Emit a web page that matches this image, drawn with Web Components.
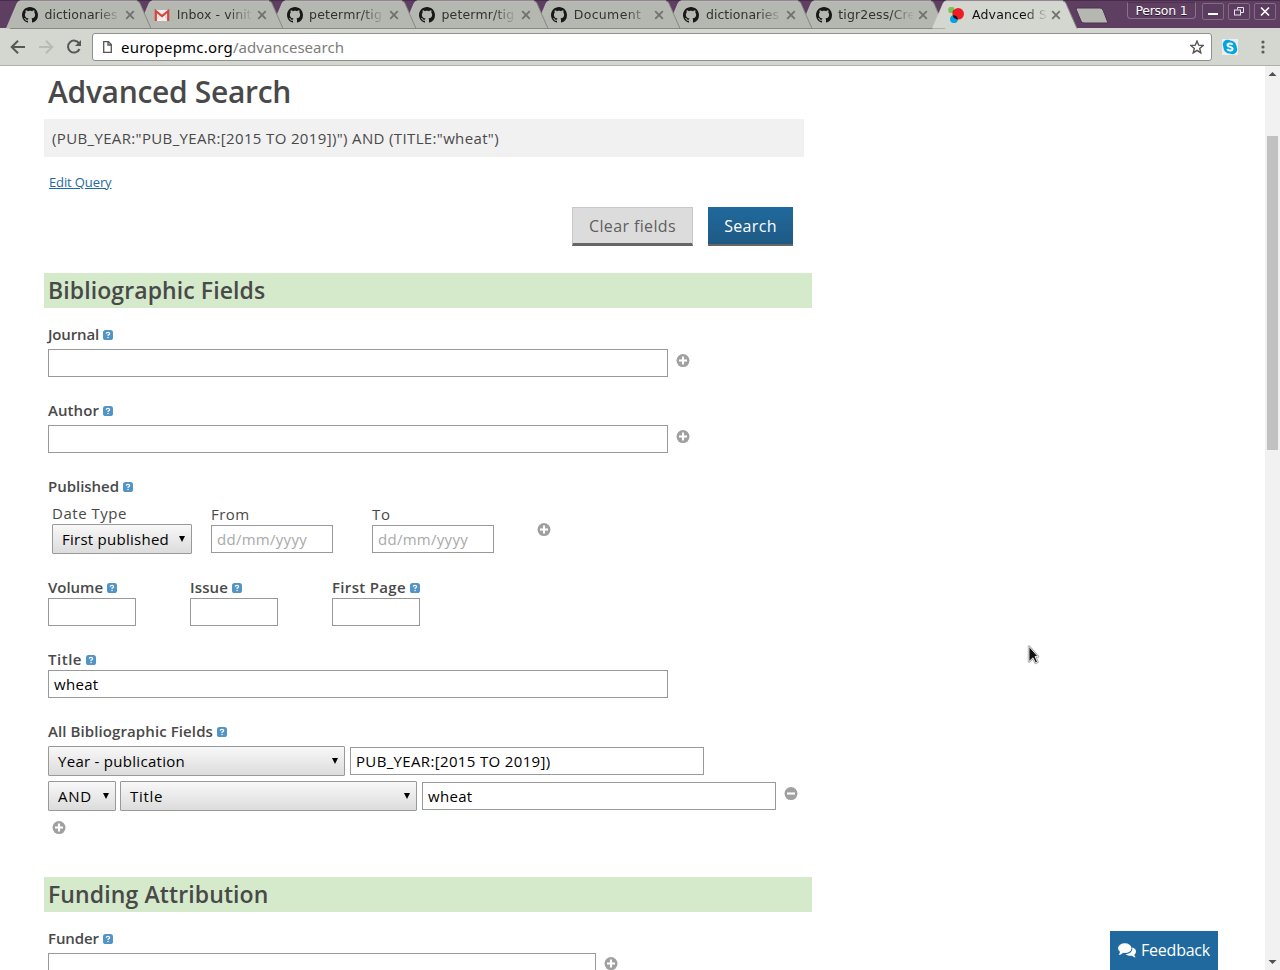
<!DOCTYPE html>
<html lang="en">
<head>
<meta charset="utf-8">
<title>Advanced Search - Europe PMC</title>
<style>
html,body{margin:0;padding:0;height:970px;overflow:hidden;background:#fff}
body{font-family:"Open Sans","Noto Sans",sans-serif;color:#494949}
</style>
</head>
<body>
<browser-window></browser-window>
<script>
const define = (name, html, setup) => {
  const t = document.createElement('template');
  t.innerHTML = '<style>*{box-sizing:border-box}</style>' + html;
  customElements.define(name, class extends HTMLElement {
    constructor() {
      super();
      this.attachShadow({mode: 'open'}).append(t.content.cloneNode(true));
    }
    connectedCallback() { if (setup) setup(this, this.shadowRoot); }
  });
};

/* A single line of text, tracked to the width given in its "w" attribute. */
define('line-text', `<style>:host{display:block;white-space:pre;flex:none}span{display:inline-block}:host([link]) span{text-decoration:underline}</style><span><slot></slot></span>`, (el, r) => {
  const s = r.querySelector('span'), w = +el.getAttribute('w');
  if (!w) return;
  s.style.letterSpacing = '0px';
  const n = [...el.textContent].length;
  s.style.letterSpacing = ((w - s.getBoundingClientRect().width) / n).toFixed(3) + 'px';
});

define('help-icon', `<style>:host{display:block;width:10px;height:10px;flex:none}svg{display:block}</style>
<svg width="10" height="10" viewBox="0 0 10 10"><rect width="10" height="10" rx="2.6" fill="#5294c6"/><path d="M3.2 3.7Q3.4 2.300 5 2.300T6.700 3.700Q6.700 4.500 5.100 5.100V6" fill="none" stroke="#fff" stroke-width="1.200"/><rect x="4.400" y="6.900" width="1.300" height="1.200" fill="#fff"/></svg>`);

define('round-icon', `<style>:host{display:block;width:14px;height:14px;flex:none}svg{display:block;margin-top:-.5px}:host([minus]) .v{display:none}</style>
<svg width="14" height="14" viewBox="0 0 14 14"><circle cx="7" cy="6.600" r="6.500" fill="#a0a0a0"/><path d="M3 6.500H11" stroke="#fff" stroke-width="2.100"/><path class="v" d="M7 2.500V10.500" stroke="#fff" stroke-width="2.100"/></svg>`);

define('text-box', `<style>:host{display:flex;align-items:center;height:28px;border:1px solid #999;background:#fff;padding-left:5px;font-size:15px;line-height:20px;color:#000;flex:none;box-sizing:border-box}
:host([hint]){color:#a9a9a9}</style><slot></slot>`);

define('select-box', `<style>:host{display:flex;align-items:center;justify-content:space-between;height:30px;border:1px solid #999;border-radius:1px;background:linear-gradient(#f8f8f8,#dcdcdc);padding:0 6px 0 9px;font-size:15px;line-height:20px;color:#000;flex:none;box-sizing:border-box}
svg{display:block;margin-bottom:1px}</style><slot></slot><svg width="6" height="6"><path d="M0 0H6L3 6Z" fill="#000"/></svg>`);

define('field-label', `<style>:host{display:flex;align-items:center;gap:4px;height:20px;font-size:15px;line-height:20px;font-weight:600;color:#494949}slot{display:block;margin-bottom:2px}</style><slot></slot><help-icon></help-icon>`);

define('section-title', `<style>:host{display:block;width:768px;height:35px;background:#d5eacb;padding-left:4px;font-size:23px;line-height:34px;font-weight:600;color:#494949;box-sizing:border-box}</style><slot></slot>`);

define('github-icon', `<style>:host{display:block;width:16px;height:16px}svg{display:block}</style><svg width="16" height="16" viewBox="0 0 16 16"><path fill="#181818" d="M8 0C3.58 0 0 3.58 0 8c0 3.54 2.29 6.53 5.47 7.59.4.07.55-.17.55-.38 0-.19-.01-.82-.01-1.49-2.01.37-2.53-.49-2.69-.94-.09-.23-.48-.94-.82-1.13-.28-.15-.68-.52-.01-.53.63-.01 1.08.58 1.23.82.72 1.21 1.87.87 2.33.66.07-.52.28-.87.51-1.07-1.78-.2-3.64-.89-3.64-3.95 0-.87.31-1.59.82-2.15-.08-.2-.36-1.02.08-2.12 0 0 .67-.21 2.2.82.64-.18 1.32-.27 2-.27s1.36.09 2 .27c1.53-1.04 2.2-.82 2.2-.82.44 1.1.16 1.92.08 2.12.51.56.82 1.27.82 2.15 0 3.07-1.87 3.75-3.65 3.95.29.25.54.73.54 1.48 0 1.07-.01 1.93-.01 2.2 0 .21.15.46.55.38A8.01 8.01 0 0016 8c0-4.42-3.58-8-8-8z"/></svg>`);
define('gmail-icon', `<style>:host{display:block;width:16px;height:16px}svg{display:block}</style><svg width="16" height="16" viewBox="0 0 16 16"><path d="M1 3H15V14H1Z" fill="#eee"/><path d="M2 13L6 8M14 13L10 8" stroke="#d0d0d0" fill="none"/><path d="M1.800 14V4L8 9L14.200 4V14" fill="none" stroke="#d8453a" stroke-width="2.200"/></svg>`);
define('pmc-icon', `<style>:host{display:block;width:16px;height:16px}svg{display:block}</style><svg width="16" height="16" viewBox="0 0 16 16"><circle cx="3.400" cy="2.900" r="3.200" fill="#7fc255"/><circle cx="6" cy="12.200" r="3.900" fill="#00a4e4"/><circle cx="10.200" cy="6.800" r="5.800" fill="#ee1c25"/><path d="M3.400 9.100A4 4 0 0 1 9.900 12.400A5.800 5.800 0 0 1 4.700 8.500Z" fill="#161629"/><path d="M4.800 4.500L6.200 2.500A4 4 0 0 1 4.600 5.800Z" fill="#59351c"/></svg>`);

define('browser-tab', `<style>
:host{display:block;position:relative;width:132.300px;height:28px;flex:none;color:#30332e;font-family:"DejaVu Sans",sans-serif;font-size:12.500px}
svg.bg{position:absolute;left:0;top:0;overflow:visible}
:host([active]) svg.bg .fill{fill:#d4d7d0}
:host([active]) svg.bg .line{display:none}
:host([active]){color:#111}
.row{position:relative;display:flex;align-items:center;height:28px;padding:1px 0 0 15px}
.label{width:76px;margin-left:6.500px;overflow:hidden;line-height:20px;white-space:pre;-webkit-mask-image:linear-gradient(90deg,#000 52px,transparent 76px)}
:host([active]) .label{margin-left:8px;width:75px}
:host([active]) .close{margin-left:3.500px}
.close{display:block;margin-left:4px}
</style>
<svg class="bg" width="145" height="29"><path class="fill" d="M-.5 28.500L10 3.500Q11 1 13 1H130Q132 1 133 3.500L144 28.500Z" fill="#b5b8b1"/><path d="M-.5 28L10 3.500Q11 1 13 1" fill="none" stroke="#d8dad5" stroke-width=".6"/><path d="M13 .8H130" stroke="#cfd1cc" stroke-width=".8"/><path d="M130 1Q132 1 133 3.500L144 28.500" fill="none" stroke="#868982"/><path class="line" d="M3 28.500H144" stroke="#868982"/></svg>
<div class="row"><slot name="icon"></slot><div class="label"><slot></slot></div>
<svg class="close" width="10" height="10"><path d="M1.200 1.200L8.800 8.800M8.800 1.200L1.200 8.800" stroke="#70736d" stroke-width="1.800"/></svg></div>`);

define('tab-strip', `<style>
:host{display:flex;height:28px;background:#5e3f62;border-top:1px solid #472d4b;padding-left:7px;align-items:flex-start;box-sizing:border-box;position:relative}
browser-tab{margin-top:-1px}
.new{margin:6px 0 0 10px;flex:none}
.who{margin:1px 0 0 18px;width:69px;height:17px;border:1px solid #8a718d;border-top-color:#4c3250;border-radius:0 0 4px 4px;font:12.500px/16px "DejaVu Sans",sans-serif;color:#fff;text-shadow:0 1px #2c1730;padding-left:7px}
.wb{margin:2px 0 0 4px;width:22px;height:17px;border:1px solid #846b87;border-radius:2px;background:#5b3d5f}
.wb svg{display:block}
</style>
<browser-tab style="z-index:7"><github-icon slot="icon"></github-icon><line-text w="73">dictionaries</line-text></browser-tab>
<browser-tab style="z-index:6"><gmail-icon slot="icon"></gmail-icon><line-text w="75">Inbox - vinit</line-text></browser-tab>
<browser-tab style="z-index:5"><github-icon slot="icon"></github-icon><line-text w="73">petermr/tig</line-text></browser-tab>
<browser-tab style="z-index:4"><github-icon slot="icon"></github-icon><line-text w="73">petermr/tig</line-text></browser-tab>
<browser-tab style="z-index:3"><github-icon slot="icon"></github-icon><line-text w="67.500">Document</line-text></browser-tab>
<browser-tab style="z-index:2"><github-icon slot="icon"></github-icon><line-text w="73">dictionaries</line-text></browser-tab>
<browser-tab style="z-index:1"><github-icon slot="icon"></github-icon><line-text w="77">tigr2ess/Cre</line-text></browser-tab>
<browser-tab active style="z-index:9"><pmc-icon slot="icon"></pmc-icon><line-text w="75">Advanced S</line-text></browser-tab>
<svg class="new" width="34" height="18"><path d="M2 1H25Q27 1 28 3L33 16H9Q7 16 6 14L1 2Z" fill="#b5b8b1" stroke="#4c3250"/></svg>
<div class="who"><line-text w="52">Person 1</line-text></div>
<div class="wb" style="margin-left:6px"><svg width="20" height="15"><path d="M5 10H15" stroke="#fff" stroke-width="2"/></svg></div>
<div class="wb"><svg width="20" height="15"><path d="M8.500 5.500V3.500H14.500V8.500H12" fill="none" stroke="#e9e4ea" stroke-width="1"/><rect x="5.500" y="6" width="6" height="5" fill="none" stroke="#e9e4ea" stroke-width="1"/></svg></div>
<div class="wb"><svg width="20" height="15"><path d="M6 3.500L14 11.500M14 3.500L6 11.500" stroke="#fff" stroke-width="1.600"/></svg></div>`);

define('tool-bar', `<style>
:host{display:flex;align-items:center;height:38px;background:#d4d7d0;border-bottom:1px solid #b0b3ac;box-sizing:border-box;padding:1px 0 0}
svg{display:block;flex:none}
.url{display:flex;align-items:center;width:1120px;height:28px;margin-left:9px;background:#fff;border:1px solid #8f918c;border-radius:3px;font:15px/20px "Noto Sans",sans-serif;color:#000;padding:0 7px 0 10px}
.url i{font-style:normal;color:#7d7d7d}
.grow{flex:1}
</style>
<svg width="83" height="28" fill="none" stroke="#565856" stroke-width="2"><path d="M25 14H12M18 7.700L11.700 14L18 20.300"/><path d="M39 14H52M46 7.700L52.300 14L46 20.300" stroke="#b8bbb5"/><path d="M79.200 10.600A6 6 0 1 0 79.500 16"/><path d="M81 7V13H75Z" fill="#565856" stroke="none"/></svg>
<div class="url"><svg width="18" height="14"><path d="M.7 1.700H5.500L8.300 4.500V12.300H.7ZM5 2V5H8" fill="none" stroke="#555" stroke-width="1.300"/></svg><line-text w="112">europepmc.org</line-text><i><line-text w="111">/advancesearch</line-text></i><span class="grow"></span>
<svg width="14" height="14" viewBox="0 0 14 14"><path d="M7 1L8.700 5.200L13.200 5.500L9.700 8.400L10.800 12.900L7 10.400L3.200 12.900L4.300 8.400L.8 5.500L5.300 5.200Z" fill="none" stroke="#555" stroke-width="1.400"/></svg></div>
<svg style="margin-left:10px" width="16" height="16"><rect width="16" height="16" fill="#eee"/><circle cx="5.500" cy="5.500" r="4.700" fill="#00a5e3"/><circle cx="10.500" cy="10.500" r="4.700" fill="#00a5e3"/><circle cx="8" cy="8" r="6.600" fill="#00a5e3"/><path d="M10.600 5.700Q9.800 4.500 8 4.500Q5.500 4.500 5.500 6.100Q5.500 7.400 8 7.900Q10.600 8.400 10.600 9.900Q10.600 11.500 8 11.500Q6 11.500 5.300 10" fill="none" stroke="#fff" stroke-width="1.900"/></svg>
<svg style="margin-left:21.500px" width="6" height="16" fill="#5a5c59"><circle cx="3" cy="3" r="1.600"/><circle cx="3" cy="8" r="1.600"/><circle cx="3" cy="13" r="1.600"/></svg>`);

define('scroll-bar', `<style>:host{display:flex;flex-direction:column;align-items:center;width:15px;height:904px;background:#f1f1f1}
svg{display:block}.thumb{width:11px;height:314px;background:#c1c1c1;margin:56px 0 505px}</style>
<svg width="15" height="14"><path d="M3.500 10H11.500L7.500 6Z" fill="#505050"/></svg><div class="thumb"></div><svg width="15" height="15"><path d="M3.500 5H11.500L7.500 9Z" fill="#505050"/></svg>`);

define('push-button', `<style>:host{display:flex;justify-content:center;height:39px;padding-top:6px;box-sizing:border-box;border:1px solid #c8c8c8;border-bottom:3px solid #666;background:#dcdcdc;color:#5f5f5f;font-size:16px;line-height:24px}
:host([primary]){border-color:#206a9e #206a9e #666;border-width:0 0 2px;padding-top:7px;background:linear-gradient(#20699c,#1e5a85);color:#fff}</style><slot></slot>`);

define('search-form', `<style>
:host{display:block;width:1265px;height:904px;overflow:hidden;padding-left:44px;box-sizing:border-box}
h1{margin:0;padding:4px 0 0 4px;height:53px;font-size:30px;line-height:44px;font-weight:600;color:#494949}
.query{width:760px;height:38px;background:#f1f1f1;padding:9px 8px;font-size:15px;line-height:20px}
.edit{display:block;margin:15px 0 0 5px;font-size:13px;line-height:20px;color:#1f6a9e;width:64px}
.buttons{display:flex;gap:15px;margin:15px 0 27px 528px}
.group{padding-left:4px}
.row{display:flex;align-items:flex-start}
.row round-icon{margin-left:8px}
.cap{font-size:15px;line-height:18px;height:20px}
</style>
<h1><line-text w="243">Advanced Search</line-text></h1>
<div class="query"><line-text w="447">(PUB_YEAR:"PUB_YEAR:[2015 TO 2019])") AND (TITLE:"wheat")</line-text></div>
<a class="edit"><line-text link w="62.500">Edit Query</line-text></a>
<div class="buttons"><push-button style="width:121px"><line-text w="87">Clear fields</line-text></push-button><push-button primary style="width:85px"><line-text w="52.500">Search</line-text></push-button></div>
<section-title><line-text w="217.300">Bibliographic Fields</line-text></section-title>
<div class="group">
 <field-label style="margin-top:17px"><line-text w="51">Journal</line-text></field-label>
 <div class="row" style="margin-top:4px"><text-box style="width:620px"></text-box><round-icon style="margin-top:5px"></round-icon></div>
 <field-label style="margin-top:24px"><line-text w="51">Author</line-text></field-label>
 <div class="row" style="margin-top:4px"><text-box style="width:620px"></text-box><round-icon style="margin-top:5px"></round-icon></div>
 <field-label style="margin-top:24px"><line-text w="71">Published</line-text></field-label>
 <div class="row" style="margin-top:7px;padding-left:4px">
  <div><div class="cap"><line-text w="75">Date Type</line-text></div><select-box style="width:140px"><line-text w="107">First published</line-text></select-box></div>
  <div style="margin:1px 0 0 19px"><div class="cap"><line-text w="38.500">From</line-text></div><text-box hint style="width:122px"><line-text w="90">dd/mm/yyyy</line-text></text-box></div>
  <div style="margin:1px 0 0 39px"><div class="cap"><line-text w="19">To</line-text></div><text-box hint style="width:122px"><line-text w="90">dd/mm/yyyy</line-text></text-box></div>
  <round-icon style="margin:19px 0 0 43px"></round-icon>
 </div>
 <div class="row" style="margin-top:24px">
  <div style="width:142px"><field-label><line-text w="55">Volume</line-text></field-label><text-box style="width:88px"></text-box></div>
  <div style="width:142px"><field-label><line-text w="38">Issue</line-text></field-label><text-box style="width:88px"></text-box></div>
  <div style="width:142px"><field-label><line-text w="74">First Page</line-text></field-label><text-box style="width:88px"></text-box></div>
 </div>
 <field-label style="margin-top:24px"><line-text w="34">Title</line-text></field-label>
 <text-box style="width:620px"><line-text w="44.500">wheat</line-text></text-box>
 <field-label style="margin-top:24px"><line-text w="165">All Bibliographic Fields</line-text></field-label>
 <div class="row" style="margin-top:4px"><select-box style="width:297px"><line-text w="127">Year - publication</line-text></select-box><text-box style="width:354px;margin:1px 0 0 5px"><line-text w="194.500">PUB_YEAR:[2015 TO 2019])</line-text></text-box></div>
 <div class="row" style="margin-top:5px"><select-box style="width:68px"><line-text w="34">AND</line-text></select-box><select-box style="width:297px;margin-left:4px"><line-text w="33">Title</line-text></select-box><text-box style="width:354px;margin:1px 0 0 5px"><line-text w="44.500">wheat</line-text></text-box><round-icon minus style="margin-top:6px"></round-icon></div>
 <round-icon style="margin:10px 0 0 4px"></round-icon>
</div>
<section-title style="margin-top:42px"><line-text w="220.500">Funding Attribution</line-text></section-title>
<div class="group">
 <field-label style="margin-top:17px"><line-text w="51">Funder</line-text></field-label>
 <div class="row" style="margin-top:4px"><text-box style="width:548px"></text-box><round-icon style="margin-top:5px"></round-icon></div>
</div>`);

define('feedback-button', `<style>:host{display:flex;align-items:center;width:108px;height:39px;background:#20699e;color:#fff;font-size:16px;line-height:24px;padding:0 0 1px 8px;gap:5px;box-sizing:border-box}svg{display:block}</style>
<svg width="18" height="15" viewBox="0 0 18 15" fill="#fff"><path d="M14.200 4.500C16.600 5 18 6.500 18 8.400C18 9.800 17.300 10.900 16.200 11.700C16.400 12.700 17 13.400 17.600 14.200C16 14.200 14.900 13.600 13.900 12.700C11.300 13.100 8.800 12.500 7.500 11C11.800 11 15 8.300 14.200 4.500Z"/><ellipse cx="6.800" cy="5.200" rx="6.700" ry="4.900"/><path d="M2 8C2 10 1.400 10.900.7 11.800C2.700 11.700 4 10.900 5.200 9.700Z"/></svg><line-text w="69">Feedback</line-text>`);

define('browser-window', `<style>:host{display:block;width:1280px;height:970px;position:relative;overflow:hidden}
.view{display:flex}
feedback-button{position:absolute;left:1110px;top:931px}
.cursor{position:absolute;left:1027px;top:645px}</style>
<tab-strip></tab-strip><tool-bar></tool-bar><div class="view"><search-form></search-form><scroll-bar></scroll-bar></div>
<feedback-button></feedback-button>
<svg class="cursor" width="15" height="21"><path d="M2 1.500L11 11.500H8L10.500 17L8.500 18L6 12.800L2 16.500Z" fill="#111" stroke="#aaa" stroke-width="2.500" stroke-linejoin="round"/><path d="M2 1.500L11 11.500H8L10.500 17L8.500 18L6 12.800L2 16.500Z" fill="#111" stroke="#fff" stroke-width=".8"/></svg>`);
</script>
</body>
</html>
